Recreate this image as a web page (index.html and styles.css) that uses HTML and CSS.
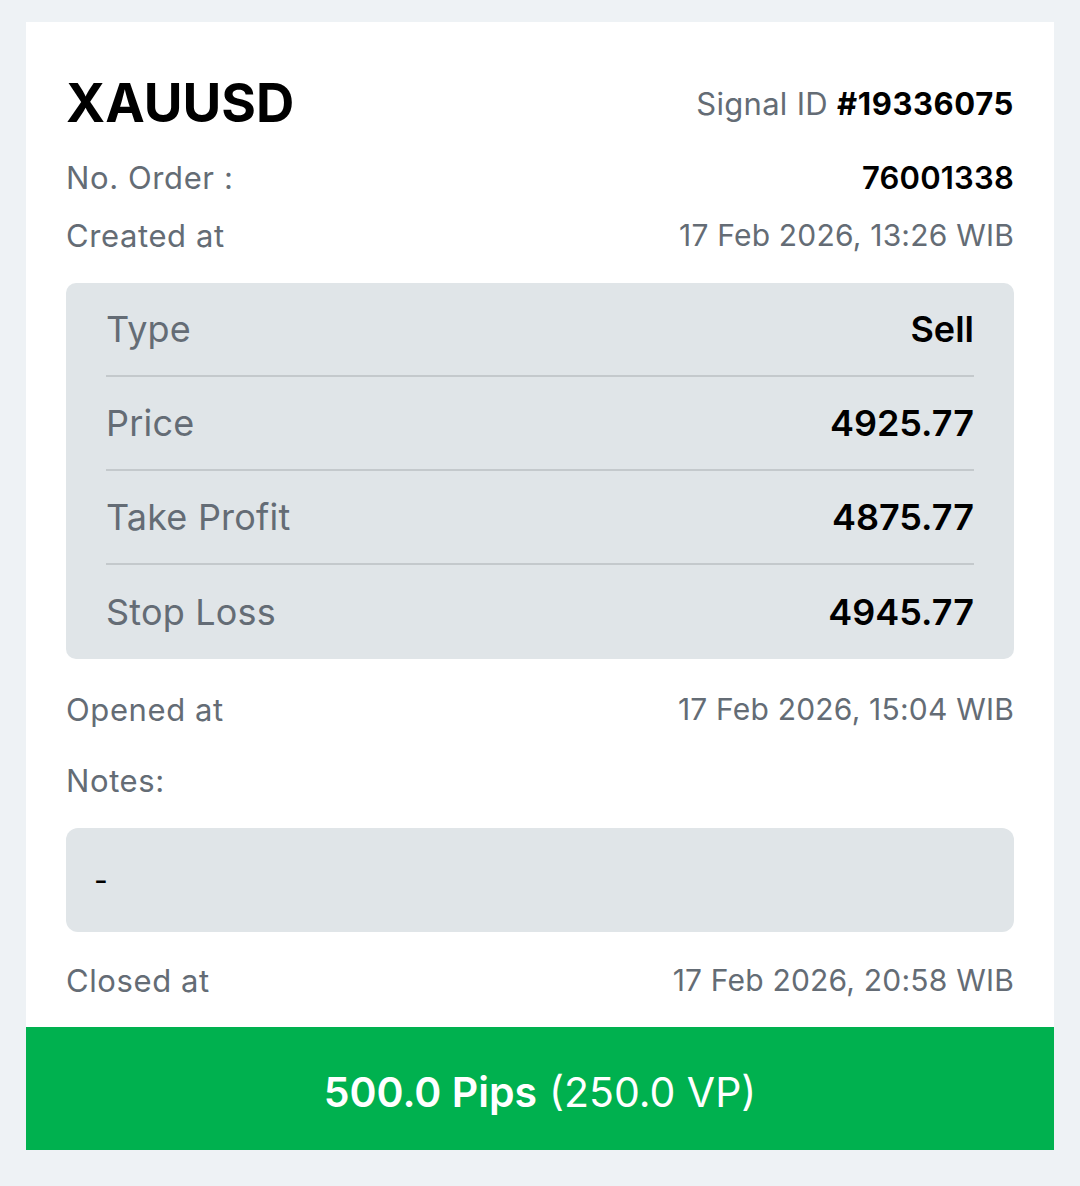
FILE: index.html
```html
<!DOCTYPE html>
<html>
<head>
    <meta charset="utf-8" />
    <title>Signal XAUUSD</title>
    <link rel="stylesheet" href="styles.css">
</head>
<body>
    <div class="kartya">
        <div class="fejlec">
            <h1 class="par">XAUUSD</h1>
            <div class="signal">Signal ID <b>#19336075</b></div>
        </div>

        <div class="sor elso">
            <span class="cimke">No. Order :</span>
            <span class="ertek vastag">76001338</span>
        </div>
        <div class="sor">
            <span class="cimke">Created at</span>
            <span class="ertek">17 Feb 2026, 13:26 WIB</span>
        </div>

        <div class="adatok">
            <div class="adatsor">
                <span>Type</span>
                <b>Sell</b>
            </div>
            <div class="adatsor">
                <span>Price</span>
                <b>4925.77</b>
            </div>
            <div class="adatsor">
                <span>Take Profit</span>
                <b>4875.77</b>
            </div>
            <div class="adatsor">
                <span>Stop Loss</span>
                <b>4945.77</b>
            </div>
        </div>

        <div class="sor nyitva">
            <span class="cimke">Opened at</span>
            <span class="ertek">17 Feb 2026, 15:04 WIB</span>
        </div>
        <div class="sor jegyzet">
            <span class="cimke">Notes:</span>
        </div>
        <div class="jegyzetdoboz">-</div>
        <div class="sor zarva">
            <span class="cimke">Closed at</span>
            <span class="ertek">17 Feb 2026, 20:58 WIB</span>
        </div>

        <div class="eredmeny">
            <b>500.0 Pips</b> (250.0 VP)
        </div>
    </div>
</body>
</html>
```

FILE: styles.css
```css
* {
    box-sizing: border-box;
}

html {
    background-color: #eef2f5;
}

body {
    margin: 0;
    padding: 22px 26px 0 26px;
    font-family: Inter, "Noto Sans", sans-serif;
    color: #000;
}

.kartya {
    background-color: #fff;
    padding-top: 40px;
}

.fejlec {
    display: flex;
    justify-content: space-between;
    align-items: center;
    height: 82px;
    padding: 0 40px;
}

.par {
    margin: 0;
    font-size: 53px;
    font-weight: 700;
}

.signal {
    font-size: 31px;
    color: #646c75;
    letter-spacing: 0.3px;
}

.signal b {
    color: #000;
    font-weight: 700;
    letter-spacing: 0.6px;
}

.sor {
    display: flex;
    justify-content: space-between;
    align-items: center;
    height: 58px;
    padding: 0 40px;
    font-size: 30px;
}

.cimke {
    color: #646c75;
    font-size: 31px;
    letter-spacing: 0.6px;
}

.ertek {
    color: #646c75;
    letter-spacing: 0.2px;
}

.ertek.vastag {
    color: #000;
    font-weight: 600;
    font-size: 31px;
}

.elso {
    margin-top: 4px;
}

.adatok {
    margin: 19px 40px 0 40px;
    padding: 0 40px;
    background-color: #e0e5e8;
    border-radius: 10px;
}

.adatsor {
    display: flex;
    justify-content: space-between;
    align-items: center;
    height: 94px;
    font-size: 36px;
    border-bottom: 2px solid #c4c9cc;
}

.adatsor:last-child {
    border-bottom: none;
}

.adatsor span {
    color: #646c75;
    letter-spacing: 0.2px;
}

.adatsor b {
    font-weight: 600;
}

.nyitva {
    margin-top: 21px;
}

.jegyzet {
    margin-top: 13px;
}

.jegyzetdoboz {
    margin: 19px 40px 0 40px;
    height: 104px;
    padding: 0 28px;
    display: flex;
    align-items: center;
    background-color: #e0e5e8;
    border-radius: 12px;
    font-size: 30px;
}

.zarva {
    margin-top: 19px;
}

.eredmeny {
    margin-top: 18px;
    height: 123px;
    padding-top: 6px;
    display: flex;
    justify-content: center;
    align-items: center;
    gap: 12px;
    background-color: #00b14f;
    color: #fff;
    font-size: 41px;
}

.eredmeny b {
    font-weight: 600;
}
```
